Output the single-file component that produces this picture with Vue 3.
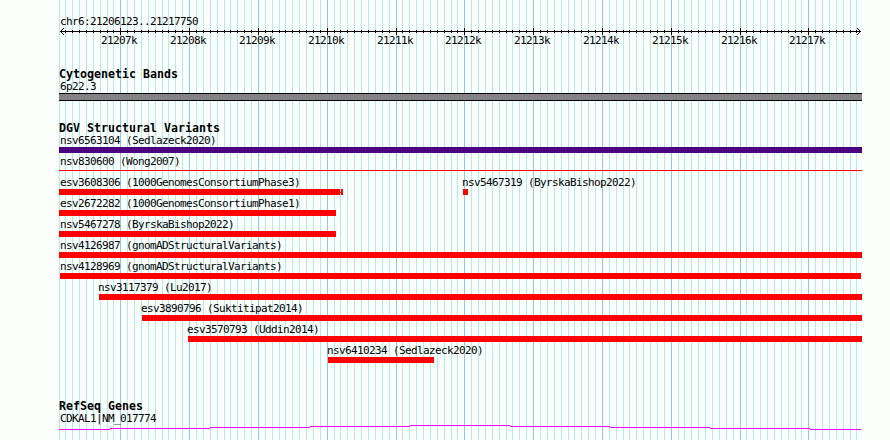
<template>
  <div class="browser">
    <svg class="gridlines" width="890" height="440" shape-rendering="crispEdges">
      <rect
        v-for="line in gridlines"
        :key="line.x"
        :x="line.x"
        y="0"
        width="1"
        height="440"
        :class="line.major ? 'major' : 'minor'"
      />
    </svg>

    <main class="panel">
      <section class="ruler">
        <div class="label">chr6:21206123..21217750</div>
        <svg class="axis" width="803" height="7" shape-rendering="crispEdges">
          <rect x="1" y="3" width="801" height="1" />
          <rect
            v-for="tick in ticks"
            :key="tick.x"
            :x="tick.x - LEFT"
            :y="tick.major ? 0 : 2"
            width="1"
            :height="tick.major ? 7 : 3"
          />
          <rect v-for="n in 3" :key="'l' + n" :x="1 + n" :y="3 - n" width="1" :height="1" />
          <rect v-for="n in 3" :key="'m' + n" :x="1 + n" :y="3 + n" width="1" :height="1" />
          <rect v-for="n in 3" :key="'r' + n" :x="801 - n" :y="3 - n" width="1" :height="1" />
          <rect v-for="n in 3" :key="'s' + n" :x="801 - n" :y="3 + n" width="1" :height="1" />
        </svg>
        <div class="scale">
          <span
            v-for="(mark, i) in majors"
            :key="mark.text"
            class="mark"
            :style="{ marginLeft: markGap(i) + 'px' }"
          >{{ mark.text }}</span>
        </div>
      </section>

      <section class="track cytobands">
        <h2>Cytogenetic Bands</h2>
        <div class="label">6p22.3</div>
        <div class="band"></div>
      </section>

      <section class="track variants">
        <h2>DGV Structural Variants</h2>
        <div v-for="(row, r) in rows" :key="r" class="row">
          <div
            v-for="item in row"
            :key="item.name"
            class="feature"
            :class="item.type"
            :style="{ marginLeft: item.gap + 'px', width: item.width + 'px' }"
          >
            <div class="label" :class="{ inset: item.gap === 0, outset: item.gap > 1 }">{{ item.name }} ({{ item.study }})</div>
            <div class="bar">
              <i v-if="item.tail" class="link"></i>
              <i v-if="item.tail" class="tail"></i>
            </div>
          </div>
        </div>
      </section>

      <section class="track genes">
        <h2>RefSeq Genes</h2>
        <div class="label">CDKAL1|NM_017774</div>
        <svg class="intron" width="803" height="5" shape-rendering="crispEdges">
          <rect v-for="s in intron" :key="s.x" :x="s.x" :y="s.y" :width="s.w" height="1" />
        </svg>
      </section>
    </main>
  </div>
</template>

<script setup>
const START = 21206123
const END = 21217750
const LEFT = 59
const SCALE = 800 / (END - START + 1)

function toX(pos) {
  return Math.max(LEFT, Math.round(60 + (pos - START) * SCALE))
}

const gridlines = []
for (let pos = 21206100; pos <= 21217700; pos += 100) {
  gridlines.push({ x: pos < START ? LEFT : toX(pos), major: pos % 1000 === 0, pos })
}
const ticks = gridlines.slice(1)

const majors = gridlines
  .filter((line) => line.major)
  .map((line) => ({ x: line.x, text: line.pos / 1000 + 'k' }))

// every mark is 36px wide and centred under its tick
function markGap(i) {
  return i === 0 ? majors[0].x - LEFT - 19 : majors[i].x - majors[i - 1].x - 36
}

const rows = [
  [{ name: 'nsv6563104', study: 'Sedlazeck2020', gap: 0, width: 803, type: 'complex' }],
  [{ name: 'nsv830600', study: 'Wong2007', gap: 0, width: 803, type: 'thin' }],
  [
    { name: 'esv3608306', study: '1000GenomesConsortiumPhase3', gap: 0, width: 281, tail: true },
    { name: 'nsv5467319', study: 'ByrskaBishop2022', gap: 123, width: 5 },
  ],
  [{ name: 'esv2672282', study: '1000GenomesConsortiumPhase1', gap: 0, width: 277 }],
  [{ name: 'nsv5467278', study: 'ByrskaBishop2022', gap: 0, width: 277 }],
  [{ name: 'nsv4126987', study: 'gnomADStructuralVariants', gap: 0, width: 803 }],
  [{ name: 'nsv4128969', study: 'gnomADStructuralVariants', gap: 1, width: 801 }],
  [{ name: 'nsv3117379', study: 'Lu2017', gap: 40, width: 763 }],
  [{ name: 'esv3890796', study: 'Suktitipat2014', gap: 83, width: 720 }],
  [{ name: 'esv3570793', study: 'Uddin2014', gap: 129, width: 674 }],
  [{ name: 'nsv6410234', study: 'Sedlazeck2020', gap: 269, width: 106 }],
]

const intron = [
  { x: 0, y: 4, w: 51 },
  { x: 51, y: 3, w: 100 },
  { x: 151, y: 2, w: 100 },
  { x: 251, y: 1, w: 100 },
  { x: 351, y: 0, w: 100 },
  { x: 451, y: 1, w: 100 },
  { x: 551, y: 2, w: 100 },
  { x: 651, y: 3, w: 100 },
  { x: 751, y: 4, w: 51 },
]
</script>

<style scoped>
.browser {
  position: relative;
  width: 890px;
  height: 440px;
  overflow: hidden;
  background: #fcfefc;
  color: #000;
  font-family: "DejaVu Sans Mono", monospace;
}

.gridlines {
  position: absolute;
  top: 0;
  left: 0;
}

.minor { fill: #afeeee; }
.major { fill: #87ceeb; }

.panel {
  position: relative;
  display: flex;
  flex-direction: column;
  width: 803px;
  margin-left: 59px;
  padding-top: 15px;
}

.label,
.mark {
  height: 13px;
  font-size: 11px;
  line-height: 13px;
  letter-spacing: -.622px;
  white-space: nowrap;
}

.ruler .label,
.cytobands .label,
.genes .label,
.label.inset {
  padding-left: 1px;
}

.label.outset {
  margin-left: -1px;
}

.axis,
.intron {
  display: block;
}

.scale {
  display: flex;
  height: 13px;
  margin-top: -1px;
}

.mark {
  flex: none;
  width: 36px;
}

h2 {
  height: 13px;
  margin: 0;
  font-size: 11.6px;
  line-height: 14px;
  font-weight: 700;
  letter-spacing: .016px;
  white-space: nowrap;
}

.cytobands { margin-top: 20px; }
.variants { margin-top: 20px; }
.genes { margin-top: 34px; }

.band {
  height: 6px;
  border-top: 1px solid #000;
  border-bottom: 1px solid #000;
  background: #848284;
}

.row {
  display: flex;
  height: 21px;
}

.feature {
  flex: none;
}

.bar {
  display: flex;
  align-items: center;
  height: 6px;
  background: #f00;
}

.complex .bar {
  background: #4b0082;
}

.thin .bar {
  height: 1px;
  margin-top: 2px;
}

.link {
  flex: none;
  width: 1px;
  height: 1px;
  margin-left: 100%;
  background: #f00;
}

.tail {
  flex: none;
  width: 2px;
  height: 6px;
  background: #f00;
}

.intron {
  fill: #f0f;
}
</style>
